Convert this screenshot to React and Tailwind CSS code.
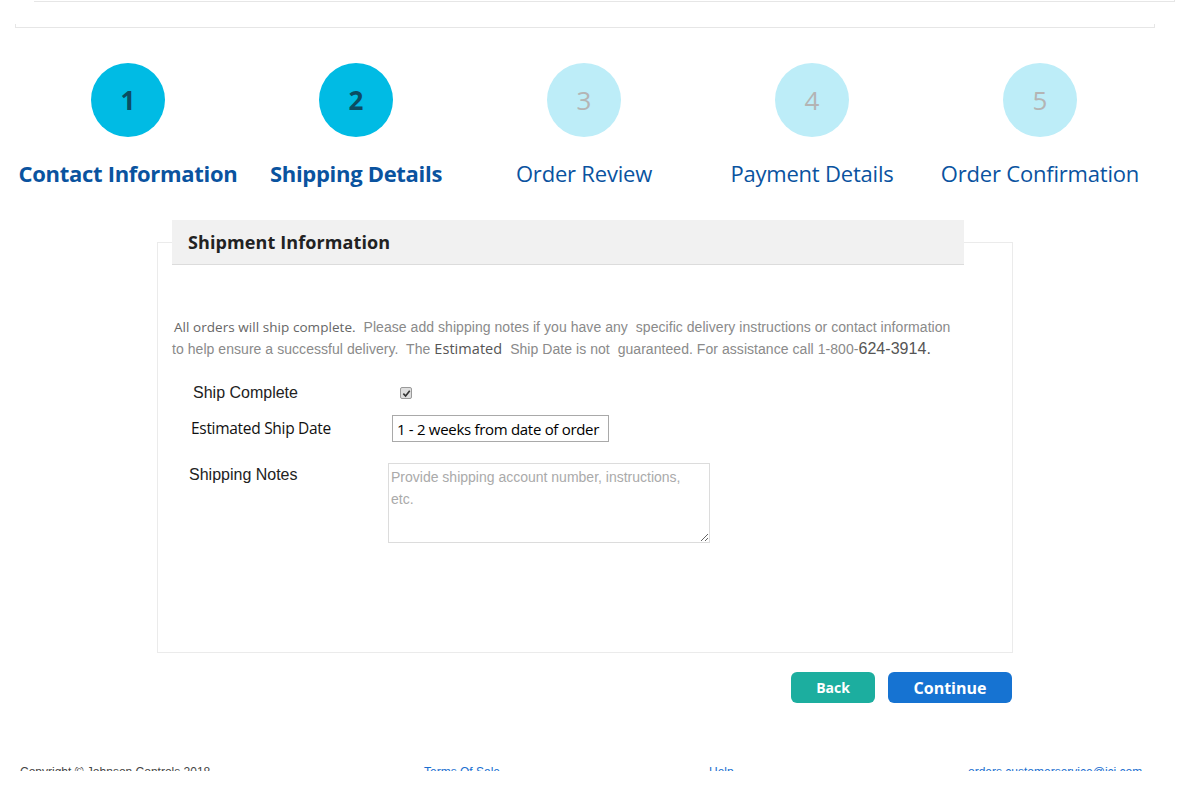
import React from "react";

const steps = [
  { n: "1", label: "Contact Information", active: true },
  { n: "2", label: "Shipping Details", active: true },
  { n: "3", label: "Order Review", active: false },
  { n: "4", label: "Payment Details", active: false },
  { n: "5", label: "Order Confirmation", active: false },
];

export default function App() {
  return (
    <div className="relative w-[1204px] h-[787px] overflow-hidden bg-white font-['Liberation_Sans',Arial,sans-serif]">
      {/* top boxes */}
      <div className="ml-[34px] w-[1141px] h-[2px] border-b border-r border-[#e6e6e6]" />
      <div className="ml-[15px] mt-[22px] w-[1140px] h-[4px] border-b border-l border-r border-[#e6e6e6]" />

      {/* steps */}
      <div className="ml-[14px] w-[1140px] grid grid-cols-5 mt-[35px]">
        {steps.map((s) => (
          <div key={s.n} className="flex flex-col items-center">
            <div
              className={
                s.active
                  ? "w-[74px] h-[74px] rounded-full bg-[#00bbe4] flex items-center justify-center text-[26px] font-bold text-[#0b4c62] font-['Open_Sans',sans-serif]"
                  : "w-[74px] h-[74px] rounded-full bg-[#bdedf8] flex items-center justify-center text-[26px] text-[#b4b4b4] font-['Open_Sans',sans-serif]"
              }
            >
              {s.n}
            </div>
            <div
              className={
                s.active
                  ? "mt-[22px] text-[22px] leading-[28px] font-bold text-[#0a539f] font-['Open_Sans',sans-serif] tracking-[-0.3px] whitespace-nowrap"
                  : "mt-[22px] text-[22px] leading-[28px] text-[#0a539f] font-['Open_Sans',sans-serif] tracking-[-0.2px] whitespace-nowrap"
              }
            >
              {s.label}
            </div>
          </div>
        ))}
      </div>

      {/* panel */}
      <div className="ml-[157px] mt-[55px] w-[856px] h-[411px] border border-[#ebebeb]">
        <div className="-mt-[23px] ml-[14px] w-[792px] h-[45px] bg-[#f1f1f1] border-b border-[#dcdcdc] flex items-center pl-[16px]">
          <span className="text-[18px] font-bold text-[#222] font-['Open_Sans',sans-serif] tracking-[0.1px]">
            Shipment Information
          </span>
        </div>

        <p className="ml-[14px] mt-[52px] text-[14px] leading-[21px] text-[#8a8a8a] whitespace-nowrap tracking-[0.05px]">
          <span className="ml-[2px] text-[#666] font-['Open_Sans',sans-serif] text-[13.5px]">All orders will ship complete.</span>
          &nbsp; Please add shipping notes if you have any &nbsp;specific delivery instructions or contact information
          <br />
          to help ensure a successful delivery.&nbsp; The <span className="text-[#555] font-['Open_Sans',sans-serif] text-[14.5px]">Estimated</span>&nbsp; Ship Date is not &nbsp;guaranteed. For assistance call 1-800-<span className="text-[#555] text-[16px]">624-3914.</span>
        </p>

        <div className="ml-[35px] mt-[21px] flex items-center h-[24px]">
          <span className="w-[207px] text-[16px] text-[#222]">Ship Complete</span>
          <span className="w-[12px] h-[12px] rounded-[2px] bg-[#dedede] border border-[#9a9a9a] flex items-center justify-center">
            <svg width="9" height="9" viewBox="0 0 10 10">
              <path d="M1.5 5.2 L4 7.8 L8.6 2" fill="none" stroke="#333" strokeWidth="1.8" />
            </svg>
          </span>
        </div>

        <div className="ml-[33px] mt-[10px] flex items-center">
          <span className="w-[201px] text-[15.5px] text-[#111] font-['Open_Sans',sans-serif] tracking-[-0.3px]">Estimated Ship Date</span>
          <input
            readOnly
            value="1 - 2 weeks from date of order"
            className="w-[217px] h-[27px] border border-[#a9a9a9] px-[4px] text-[15px] text-black font-['Open_Sans',sans-serif] tracking-[-0.3px] outline-none"
          />
        </div>

        <div className="ml-[31px] mt-[21px] flex items-start">
          <span className="w-[199px] text-[16px] text-[#222]">Shipping Notes</span>
          <textarea
            readOnly
            placeholder="Provide shipping account number, instructions, etc."
            className="w-[322px] h-[80px] border border-[#dcdcdc] pl-[2px] pr-[24px] py-[2px] text-[14px] leading-[22px] placeholder:text-[#aaa] outline-none"
          />
        </div>
      </div>

      {/* buttons */}
      <div className="ml-[791px] mt-[19px] flex gap-[13px]">
        <button className="w-[84px] h-[31px] rounded-[6px] bg-[#1cae9f] text-white text-[14px] font-bold font-['Open_Sans',sans-serif]">
          Back
        </button>
        <button className="w-[124px] h-[31px] rounded-[6px] bg-[#1673d2] text-white text-[16px] font-bold font-['Open_Sans',sans-serif]">
          Continue
        </button>
      </div>

      {/* footer (clipped by page edge in reference) */}
      <div className="mt-[64px] h-[4px] overflow-hidden text-[12px] leading-[16px]">
        <div className="-mt-[3px] flex w-full">
          <span className="ml-[20px] w-[404px] text-[#444]">Copyright © Johnson Controls 2018</span>
          <span className="w-[285px] text-[#1a6fd0]">Terms Of Sale</span>
          <span className="w-[259px] text-[#1a6fd0]">Help</span>
          <span className="text-[#1a6fd0]">orders.customerservice@jci.com</span>
        </div>
      </div>
    </div>
  );
}
